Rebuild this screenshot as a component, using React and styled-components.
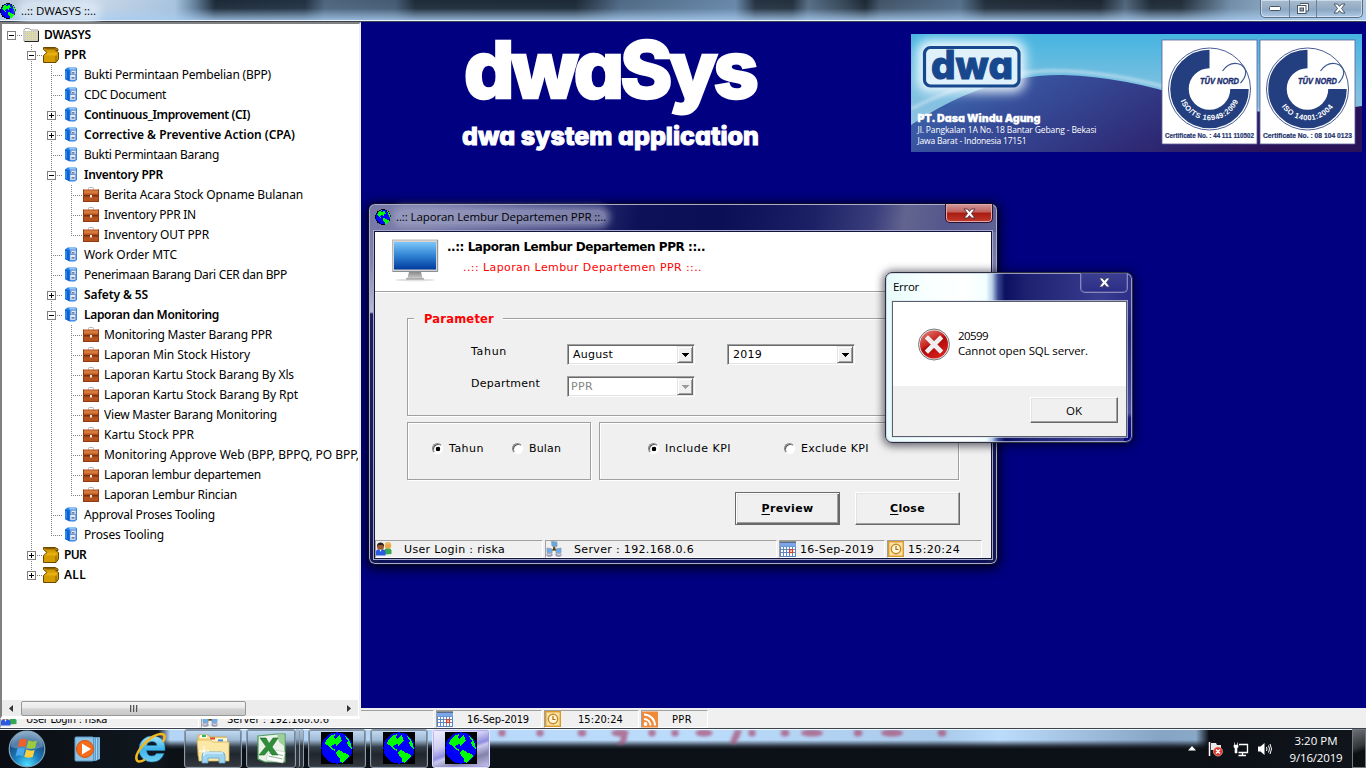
import React, { useLayoutEffect, useRef } from "react";
import styled, { createGlobalStyle, css } from "styled-components";

const Global = createGlobalStyle`
  * { box-sizing: border-box; }
  html, body { margin: 0; padding: 0; overflow: hidden; }
  body { font: 11px "DejaVu Sans", Verdana, sans-serif; color: #000; background: #000080; }
`;

const VERDANA = '"DejaVu Sans", Verdana, sans-serif';
const TAHOMA = '"DejaVu Sans Condensed", "DejaVu Sans", Tahoma, sans-serif';
const TREBUCHET = '"Trebuchet MS", "Noto Sans", sans-serif';
const SEGOE = '"Open Sans", "Noto Sans", sans-serif';
const DISPLAY = 'Inter, "Lato", sans-serif';

/* ---------- text that tracks itself out to a given width ---------- */
const Label = styled.span`
  display: inline-block;
  white-space: pre;
  font-family: ${(p) => p.$font || "inherit"};
  font-size: ${(p) => (p.$size ? p.$size + "px" : "inherit")};
  font-weight: ${(p) => p.$weight || "inherit"};
  color: ${(p) => p.$color || "inherit"};
`;

function Text({ w, size, weight, font, color, children }) {
  const ref = useRef(null);
  useLayoutEffect(() => {
    const el = ref.current;
    el.style.letterSpacing = "0px";
    const n = el.textContent.length;
    const natural = el.getBoundingClientRect().width;
    el.style.letterSpacing = (w - natural) / n + "px";
  }, [w, children]);
  return (
    <Label ref={ref} $size={size} $weight={weight} $font={font} $color={color}>
      {children}
    </Label>
  );
}

/* ---------- icons ---------- */
const GlobeIcon = ({ size = 16, square }) => (
  <svg width={size} height={size} viewBox="0 0 32 32" shapeRendering="crispEdges">
    {square ? <rect width="32" height="32" fill="#000" /> : null}
    <circle cx="16" cy="16" r="15.600" fill={square ? "#0000ff" : "#000"} />
    {square ? null : <circle cx="16" cy="16" r="14" fill="#0000ff" />}
    <path
      fill="#00ff00"
      d="M4 12L5 9L8 5L11 3L14 2L14 4L12 5L15 7L17 4L19 3L20 7L21 9L18 11L17 13L15 14L15 12L11 13L10 15L12 17L14 17L14 19L11 18L8 15L6 13ZM15 20L17 18L20 19L23 21L27 22L28 24L26 27L23 29L22 31L19 30L19 26L16 24ZM24 4L28 8L30 12L31 17L29 16L27 13L25 11L27 9Z"
    />
  </svg>
);

const FolderIcon = () => (
  <svg width="16" height="16" viewBox="0 0 16 16">
    <path d="M1 3L2 1.500H6L8 3H15V14H1Z" fill="#fff" stroke="#a0a0a0" />
    <rect x="2" y="4" width="12" height="9.500" fill="#dedba8" />
    <path d="M2 4.500H14M2 6.500H14M2 8.500H14M2 10.500H14M2 12.500H14" stroke="#c4c4c4" strokeDasharray="1 1" />
    <path d="M15.500 4V14.500H1.500" fill="none" stroke="#222" />
  </svg>
);

const BoxIcon = () => (
  <svg width="16" height="16" viewBox="0 0 16 16">
    <path d="M0.500 8.500L4 5.500L0.500 2.500V0.500H12L15 2V3.500H12.500L15.500 5.500V12L13 15.500H0.500Z" fill="#d39c00" stroke="#6b4700" />
    <path d="M1 1H12L14 2.500H3Z" fill="#8a5f00" />
    <path d="M5 5.500H14.500L12.500 8.500H1.500Z" fill="#e8b010" />
    <path d="M13 9V15" stroke="#8a5f00" />
  </svg>
);

const CabinetIcon = () => (
  <svg width="16" height="16" viewBox="0 0 16 16">
    <path d="M2 2.500L4.500 0.500H13L14 1.500V12.500L12 14.500H7L2 12Z" fill="#2a86e6" />
    <path d="M2 2.500L6.500 3.500V14.500L2 12Z" fill="#0a62d6" />
    <path d="M3 4V11.500" stroke="#5ab0ff" />
    <path d="M6 1.200H12.500L13.200 2.500H7Z" fill="#b9d9fb" />
    <path d="M7 3H13.200V13.500H7Z" fill="#6d97d4" />
    <path d="M8.500 3.800H12.700V7H8.500ZM7.300 8H12.200V12.800H7.300Z" fill="#e3ecf8" />
    <path d="M9 5.800H11.500M8.500 10.800H11.500" stroke="#44598a" strokeWidth="1.300" />
  </svg>
);

const CaseIcon = () => (
  <svg width="16" height="16" viewBox="0 0 16 16">
    <path d="M5.500 3V1.500Q5.500 0.500 6.500 0.500H9.500Q10.500 0.500 10.500 1.500V3" fill="none" stroke="#b5b5b5" />
    <rect x="0" y="2.500" width="16" height="12.500" fill="#b4531f" />
    <rect x="1" y="3.500" width="14" height="3" fill="#d67a3c" />
    <rect x="0" y="8" width="16" height="1.500" fill="#7c2f0c" />
    <path d="M0.500 2.500V15M15.500 2.500V15M0 14.500H16" stroke="#8f3a10" />
    <rect x="7" y="8" width="2" height="2.500" fill="#f3ece6" />
  </svg>
);

const UsersIcon = () => (
  <svg width="16" height="16" viewBox="0 0 16 16">
    <path d="M8.500 13.500V9.500Q8.500 7 11.500 7Q15 7 15.500 9.500V13Z" fill="#35a852" />
    <circle cx="12" cy="4.500" r="3.200" fill="#f0a542" />
    <path d="M8.800 4Q9 1 12 1Q15.200 1 15.200 4L13.500 3Z" fill="#e7bd6a" />
    <path d="M0 14.500V10.500Q0 8 4.500 8Q9 8 9.500 10.500V14.500Z" fill="#2a5ae0" />
    <circle cx="4.500" cy="5.500" r="3.500" fill="#9a5b32" />
    <path d="M1 5.500Q1 1.500 4.500 1.500Q8 1.500 8 5.500L6.500 4H2.500Z" fill="#2a211d" />
    <path d="M3.500 8.500L4.500 11L5.500 8.500Z" fill="#fff" />
  </svg>
);

const NetworkIcon = () => (
  <svg width="16" height="16" viewBox="0 0 16 16">
    <path d="M8 5V9M8 8L4.500 10M8 8L11.500 10" stroke="#8a6a2a" strokeWidth="1.800" />
    <path d="M5.500 0.500L11 1V5.500L6 5Z" fill="#5da9ea" stroke="#8b9ab0" strokeWidth="0.800" />
    <path d="M1 7L6 8V12L1 11.500ZM10 8L15 7V11.500L10 12Z" fill="#67b0f0" stroke="#8b9ab0" strokeWidth="0.800" />
    <ellipse cx="3.500" cy="13.800" rx="3.200" ry="2" fill="#9c9fb8" />
    <ellipse cx="12.500" cy="13.800" rx="3.200" ry="2" fill="#9c9fb8" />
    <path d="M1.500 13.500L5 13M11 13L14.500 13.500" stroke="#dfe2ee" />
    <rect x="7" y="6.500" width="2.500" height="3" fill="#59431b" />
  </svg>
);

const CalendarIcon = () => (
  <svg width="16" height="16" viewBox="0 0 16 16">
    <rect x="0" y="1" width="16" height="15" fill="#5f86c4" />
    <rect x="0" y="1" width="16" height="4.500" fill="#7ba7e8" />
    <path d="M0.500 1H16" stroke="#333" strokeWidth="2" strokeDasharray="1 1" />
    <path
      fill="#fff"
      d="M1 6h2v2H1zM4 6h2v2h-2zM7 6h2v2h-2zM10 6h2v2h-2zM13 6h2v2h-2zM1 9h2v2H1zM4 9h2v2h-2zM7 9h2v2h-2zM13 9h2v2h-2zM1 12h2v3H1zM4 12h2v3h-2zM7 12h2v3h-2zM10 12h2v3h-2zM13 12h2v3h-2z"
    />
    <rect x="9.700" y="8.700" width="2.800" height="2.800" fill="#fff" stroke="#e63b12" strokeWidth="1.200" />
  </svg>
);

const ClockIcon = () => (
  <svg width="16" height="16" viewBox="0 0 16 16">
    <rect x="0.700" y="0.700" width="14.600" height="14.600" fill="#fbe3a4" stroke="#d99a2b" strokeWidth="1.400" />
    <circle cx="8" cy="8" r="4.700" fill="#fff6dc" stroke="#c98a25" strokeWidth="1.500" />
    <path d="M8 5V8.500H10.500" fill="none" stroke="#a86c12" strokeWidth="1.200" />
  </svg>
);

const RssIcon = () => (
  <svg width="16" height="17" viewBox="0 0 16 16">
    <rect width="16" height="16" fill="#ef8b38" />
    <circle cx="3.500" cy="12.500" r="1.900" fill="#fff" />
    <path d="M2 7.500A6.500 6.500 0 0 1 8.500 14M2 3A11 11 0 0 1 13 14" fill="none" stroke="#fff" strokeWidth="2" />
  </svg>
);

const MonitorIcon = () => (
  <svg width="48" height="44" viewBox="0 0 48 44">
    <defs>
      <linearGradient id="screen" x1="0" y1="0" x2="0" y2="1">
        <stop offset="0" stopColor="#7cc6f8" />
        <stop offset=".5" stopColor="#2f82d4" />
        <stop offset="1" stopColor="#003a9c" />
      </linearGradient>
      <linearGradient id="stand" x1="0" y1="0" x2="0" y2="1">
        <stop offset="0" stopColor="#8a8a8a" />
        <stop offset="1" stopColor="#d8d8d8" />
      </linearGradient>
    </defs>
    <ellipse cx="23" cy="41" rx="20" ry="1.300" fill="#e2e2e2" />
    <path d="M17 33H29L31 40.500H15Z" fill="url(#stand)" />
    <rect x="14" y="39" width="18" height="1.800" fill="#b0b0b0" />
    <rect x="0.500" y="1" width="45" height="31.500" fill="#d6d3d0" stroke="#b9b9b9" />
    <path d="M45.700 1V32.500H1" fill="none" stroke="#8b8f94" />
    <rect x="2" y="3" width="42" height="27.500" fill="url(#screen)" />
  </svg>
);

const CrossMark = ({ fill = "#fff", stroke = "#50505c" }) => (
  <svg width="13" height="11" viewBox="0 0 13 11">
    <path
      d="M1 1H4.500L6.500 3.400L8.500 1H12L8.500 5.500L12 10H8.500L6.500 7.600L4.500 10H1L4.500 5.500Z"
      fill={fill}
      stroke={stroke}
    />
  </svg>
);

const ErrorIcon = () => (
  <svg width="33" height="33" viewBox="0 0 33 33">
    <defs>
      <linearGradient id="err" x1="0" y1="0" x2="0.600" y2="1">
        <stop offset="0" stopColor="#e88a84" />
        <stop offset=".5" stopColor="#c8201c" />
        <stop offset=".55" stopColor="#ad0808" />
        <stop offset="1" stopColor="#d8201c" />
      </linearGradient>
    </defs>
    <circle cx="16" cy="16.500" r="15.500" fill="#e4e4e4" stroke="#7b7b7b" />
    <circle cx="16" cy="16.500" r="14" fill="url(#err)" />
    <path d="M10 10.500L22 22.500M22 10.500L10 22.500" stroke="#efefef" strokeWidth="4.600" strokeLinecap="square" />
  </svg>
);

const ComboArrow = ({ color }) => (
  <svg width="8" height="4" viewBox="0 0 8 4" shapeRendering="crispEdges">
    <path d="M0 0H8L4 4Z" fill={color} />
  </svg>
);

const StartOrb = () => (
  <svg width="38" height="38" viewBox="0 0 38 38">
    <defs>
      <radialGradient id="orb" cx=".5" cy=".95" r=".9">
        <stop offset="0" stopColor="#4fe0ff" />
        <stop offset=".4" stopColor="#1b7fc0" />
        <stop offset=".75" stopColor="#1c4f84" />
        <stop offset="1" stopColor="#6f93b5" />
      </radialGradient>
    </defs>
    <circle cx="19" cy="19" r="17.800" fill="url(#orb)" stroke="#7fa2bd" strokeWidth="1.200" />
    <path d="M3 17A16 16 0 0 1 35 17Q19 22 3 17Z" fill="#b8d4e8" opacity=".35" />
    <path d="M11.500 10Q15 7.500 19 9.800L17.200 17.300Q13.500 15.300 9.700 17.500Z" fill="#f0602a" />
    <path d="M20.300 10.300Q24.500 12.500 29 10.500L27 18Q22.500 19.700 18.500 17.800Z" fill="#9ccb3c" />
    <path d="M9.300 19Q13 17 16.900 19L15 26.300Q11.500 24.300 7.500 26.500Z" fill="#49a9ea" />
    <path d="M18.200 19.500Q22.500 21.500 26.700 19.700L24.800 27Q20.500 28.700 16.300 26.800Z" fill="#fcd03c" />
  </svg>
);

const PlayerIcon = () => (
  <svg width="28" height="28" viewBox="0 0 28 28">
    <path d="M6 2H26V24L22 26H6Z" fill="#5b9cc9" />
    <path d="M20 3V25M22.500 3V25M25 3V24" stroke="#a9d4f0" strokeWidth="1" />
    <rect x="1" y="2" width="18.500" height="24" rx="1" fill="#8ec3e6" stroke="#5c9ac6" />
    <circle cx="11" cy="14" r="8.500" fill="#f36c1c" stroke="#d9540c" />
    <path d="M8 8.500L17 14L8 19.500Z" fill="#fff" />
  </svg>
);

const ExplorerEIcon = () => (
  <svg width="32" height="32" viewBox="0 0 32 32">
    <defs>
      <linearGradient id="ie" x1="0" y1="0" x2="0" y2="1">
        <stop offset="0" stopColor="#a9e6fb" />
        <stop offset=".5" stopColor="#3db4ea" />
        <stop offset="1" stopColor="#6fd0f4" />
      </linearGradient>
    </defs>
    <path
      fillRule="evenodd"
      d="M17 4A13 13 0 0 0 4 17A12.500 12.500 0 0 0 17 30Q26 30 29 21.500H21.500Q20 24 17 24Q12 24 11.500 18.500H30Q31 4 17 4ZM11.700 13.500Q12.500 9.500 17 9.500Q21.500 9.500 22 13.500Z"
      fill="url(#ie)"
      stroke="#1c7fb8"
      strokeWidth=".6"
    />
    <path d="M28 10Q32 2 26 2Q19 2 9 12Q-1 23 2 28.500Q4 31 10 27.500" fill="none" stroke="#f3b81d" strokeWidth="2.600" />
  </svg>
);

const LibraryIcon = () => (
  <svg width="34" height="32" viewBox="0 0 34 32">
    <path d="M2 3H12L14 5H30V24H2Z" fill="#f5dd8c" stroke="#d2a843" strokeWidth=".8" />
    <path d="M4 3H11V6H4Z" fill="#fff" />
    <rect x="6" y="3" width="4" height="2" fill="#35b455" />
    <path d="M13 6H31V10H13Z" fill="#fff4cc" />
    <rect x="14" y="5.500" width="5" height="2" fill="#d9432f" />
    <rect x="22" y="7.500" width="5" height="2" fill="#3a8bd8" />
    <path d="M1 8H15L17 10H33V29H3Z" fill="#fbe7a6" stroke="#d8b352" strokeWidth=".8" />
    <path d="M6 31V24Q6 20 10 20H25Q29 20 29 24V31H23V26H12V31Z" fill="#9fd4ef" stroke="#5ba3cf" strokeWidth=".8" />
    <path d="M8 21H27" stroke="#d9f2fd" strokeWidth="1.500" />
    <path d="M8 14V24M3 19H13" stroke="#fff" strokeWidth="1" />
  </svg>
);

const SheetIcon = () => (
  <svg width="32" height="32" viewBox="0 0 32 32">
    <path d="M3 4L22 2H30V30H10L3 27Z" fill="#e9f3e8" stroke="#4f9b58" strokeWidth="1.200" />
    <path d="M22 3H29V14L24 10Z" fill="#9fd09a" />
    <path d="M14 17L30 20L28 31L11 28Z" fill="#fff" stroke="#b9c9b9" strokeWidth=".6" />
    <path d="M14 21L28 23.500M13.500 24L27.500 27" stroke="#8fb58e" strokeWidth="1" />
    <path d="M5 6H11L14 11.500L18 6H23L17 15L23 23H17L13.500 18L9.500 23H4L11 14.500Z" fill="#2f8e3a" stroke="#1d6b28" strokeWidth=".6" />
  </svg>
);

/* ---------- main window ---------- */
const Screen = styled.div`
  position: relative;
  width: 1366px;
  height: 768px;
  overflow: hidden;
  display: grid;
  grid-template-rows: 22px 686px 20px 40px;
`;

const AppTitle = styled.header`
  display: flex;
  align-items: flex-start;
  justify-content: space-between;
  border-bottom: 1px solid #3c4450;
  box-shadow: inset 0 -1px 0 #e8f2fb;
  background:
    linear-gradient(180deg, rgba(160, 190, 220, 0.05) 0%, rgba(150, 185, 220, 0.12) 40%, rgba(168, 204, 240, 0.85) 98%),
    linear-gradient(92deg, #b6c2d0 0, #c9d8e8 100px, #a9c4de 175px, #5f7b96 195px, #15202c 215px, #1b2938 305px,
      #4a6078 325px, #40556c 395px, #17222e 415px, #15202b 575px, #4b647f 620px, #6585a6 735px, #1e2a36 755px,
      #1c2733 792px, #52687e 808px, #2e3d4c 845px, #151f29 865px, #3c4e60 880px, #506a84 960px, #1a242e 985px,
      #151d26 1100px, #4b6074 1125px, #18222c 1150px, #1a242e 1180px, #6f8aa4 1230px, #9db8d2 1300px, #b5cbe0 1366px);
`;
const TitleLeft = styled.div`
  display: flex;
  align-items: center;
  gap: 5px;
  padding-top: 1px;
  height: 20px;
  svg { display: block; }
`;
const TitleGlow = styled.div`
  height: 16px;
  display: flex;
  align-items: center;
  background: rgba(222, 234, 246, 0.75);
  box-shadow: 0 0 8px 5px rgba(222, 234, 246, 0.75);
  border-radius: 8px;
`;
const WindowButtons = styled.div`
  display: flex;
  height: 18px;
  margin-right: 3px;
  border: 1px solid #5b6e82;
  border-top: 0;
  border-radius: 0 0 5px 5px;
  background: linear-gradient(#a9bccf 0%, #93abc4 50%, #87a3c0 51%, #b0cae6 100%);
  box-shadow: inset 0 0 0 1px rgba(230, 242, 255, 0.6);
`;
const WindowButton = styled.div`
  width: ${(p) => p.$w}px;
  display: flex;
  align-items: center;
  justify-content: center;
  & + & { border-left: 1px solid #6c8096; }
`;

const Main = styled.main`
  display: flex;
  min-height: 0;
`;
const Workspace = styled.section`
  flex: 1;
  display: flex;
  justify-content: space-between;
  align-items: flex-start;
  background: #000080;
  color: #fff;
  padding: 7px 4px 0 101px;
`;
const Brand = styled.div`
  display: flex;
  flex-direction: column;
  font-family: ${DISPLAY};
  font-feature-settings: "cv11" 1;
`;
const BrandName = styled.div`
  height: 82px;
  line-height: 80px;
  font-size: 79px;
  font-weight: 800;
  padding-left: 2px;
  -webkit-text-stroke: 2.500px #fff;
`;
const BrandLine = styled.div`
  height: 40px;
  line-height: 40px;
  margin-top: 5px;
  font-size: 25px;
  font-weight: 800;
  -webkit-text-stroke: 1px #fff;
`;
const BannerWrap = styled.div`
  margin-top: 5px;
  svg { display: block; }
`;

/* ---------- tree ---------- */
const TreePanel = styled.aside`
  position: relative;
  z-index: 1;
  width: 361px;
  height: 697px;
  flex: none;
  display: flex;
  flex-direction: column;
  background: #fff;
  border-left: 2px solid #808080;
  border-top: 2px solid #808080;
  border-right: 2px solid #f0f0f0;
  border-bottom: 3px solid #fff;
`;
const Rows = styled.div`
  flex: 1;
  padding-top: 1px;
  overflow: hidden;
  width: 356px;
`;
const Row = styled.div`
  height: 20px;
  display: flex;
  align-items: center;
  font: ${(p) => (p.$bold ? 600 : 400)} 12px ${TREBUCHET};
  line-height: 20px;
  svg { display: block; flex: none; margin: 0 5px 0 1px; }
`;
const dotsV = "repeating-linear-gradient(180deg, #808080 0 1px, transparent 1px 2px)";
const dotsH = "repeating-linear-gradient(90deg, #808080 0 1px, transparent 1px 2px)";
const lines = {
  empty: css``,
  through: css`background: ${dotsV} 9px 0 / 1px 20px no-repeat;`,
  branch: css`background: ${dotsV} 9px 0 / 1px 20px no-repeat, ${dotsH} 9px 10px / 11px 1px no-repeat;`,
  last: css`background: ${dotsV} 9px 0 / 1px 10px no-repeat, ${dotsH} 9px 10px / 11px 1px no-repeat;`,
  root: css`background: ${dotsH} 9px 10px / 11px 1px no-repeat;`,
};
const Guide = styled.div`
  width: 20px;
  height: 20px;
  flex: none;
  padding: 6px 0 0 5px;
  ${(p) => lines[p.$kind]}
`;
const Toggle = styled.div`
  width: 9px;
  height: 9px;
  border: 1px solid #808080;
  background:
    linear-gradient(#000, #000) 1px 3px / 5px 1px no-repeat,
    linear-gradient(#000, #000) 3px 1px / 1px ${(p) => (p.$open ? 0 : 5)}px no-repeat,
    #fff;
`;

const ICONS = { folder: FolderIcon, box: BoxIcon, cab: CabinetIcon, case: CaseIcon };
const KINDS = { ".": "empty", "|": "through", "+": "branch", "L": "last", "r": "root" };

// [guides, icon, label, width, bold, toggle]
const TREE = [
  ["r", "folder", "DWASYS", 47, 1, "open"],
  [".+", "box", "PPR", 22, 1, "open"],
  [".|+", "cab", "Bukti Permintaan Pembelian (BPP)", 187],
  [".|+", "cab", "CDC Document", 82],
  [".|+", "cab", "Continuous_Improvement (CI)", 166, 1, "closed"],
  [".|+", "cab", "Corrective & Preventive Action (CPA)", 211, 1, "closed"],
  [".|+", "cab", "Bukti Permintaan Barang", 135],
  [".|+", "cab", "Inventory PPR", 79, 1, "open"],
  [".||+", "case", "Berita Acara Stock Opname Bulanan", 199],
  [".||+", "case", "Inventory PPR IN", 92],
  [".||L", "case", "Inventory OUT PPR", 105],
  [".|+", "cab", "Work Order MTC", 93],
  [".|+", "cab", "Penerimaan Barang Dari CER dan BPP", 203],
  [".|+", "cab", "Safety & 5S", 64, 1, "closed"],
  [".|+", "cab", "Laporan dan Monitoring", 135, 1, "open"],
  [".||+", "case", "Monitoring Master Barang PPR", 168],
  [".||+", "case", "Laporan Min Stock History", 146],
  [".||+", "case", "Laporan Kartu Stock Barang By Xls", 190],
  [".||+", "case", "Laporan Kartu Stock Barang By Rpt", 194],
  [".||+", "case", "View Master Barang Monitoring", 173],
  [".||+", "case", "Kartu Stock PPR", 90],
  [".||+", "case", "Monitoring Approve Web (BPP, BPPQ, PO BPP,", 255],
  [".||+", "case", "Laporan lembur departemen", 157],
  [".||L", "case", "Laporan Lembur Rincian", 133],
  [".|+", "cab", "Approval Proses Tooling", 131],
  [".|L", "cab", "Proses Tooling", 80],
  [".+", "box", "PUR", 22, 1, "closed"],
  [".L", "box", "ALL", 22, 1, "closed"],
];

const ScrollBar = styled.div`
  height: 16px;
  width: 356px;
  display: flex;
  align-items: center;
  background: #ececec;
`;
const ScrollArrow = styled.div`
  width: 18px;
  display: flex;
  justify-content: center;
`;
const ScrollThumb = styled.div`
  width: 225px;
  height: 15px;
  margin-left: 1px;
  border: 1px solid #979797;
  border-radius: 2px;
  background: linear-gradient(#f4f4f4 0, #e8e8e8 48%, #d3d3d3 52%, #c8c8c8 100%);
  display: flex;
  align-items: center;
  justify-content: center;
  gap: 2px;
`;
const Grip = styled.i`
  width: 1px;
  height: 7px;
  background: #555;
  box-shadow: 1px 0 #bbb;
`;
const Spacer = styled.div`
  flex: 1;
`;

function Tree() {
  return (
    <TreePanel>
      <Rows>
        {TREE.map(([guides, icon, label, w, bold, toggle]) => {
          const Icon = ICONS[icon];
          return (
            <Row key={label} $bold={bold}>
              {[...guides].map((g, i) => (
                <Guide key={i} $kind={KINDS[g]}>
                  {toggle && i === guides.length - 1 ? <Toggle $open={toggle === "open"} /> : null}
                </Guide>
              ))}
              <Icon />
              <Text w={w}>{label}</Text>
            </Row>
          );
        })}
      </Rows>
      <ScrollBar>
        <ScrollArrow>
          <svg width="4" height="7" viewBox="0 0 4 7"><path d="M4 0V7L0 3.500Z" fill="#333" /></svg>
        </ScrollArrow>
        <ScrollThumb><Grip /><Grip /><Grip /></ScrollThumb>
        <Spacer />
        <ScrollArrow>
          <svg width="4" height="7" viewBox="0 0 4 7"><path d="M0 0V7L4 3.500Z" fill="#333" /></svg>
        </ScrollArrow>
      </ScrollBar>
    </TreePanel>
  );
}

/* ---------- status bars ---------- */
const StatusBar = styled.footer`
  display: flex;
  gap: ${(p) => p.$gap}px;
  height: ${(p) => p.$h}px;
  padding-top: 2px;
  background: #f0f0f0;
  font-family: ${(p) => p.$font};
  font-size: 11px;
`;
const StatusCell = styled.div`
  width: ${(p) => p.$w}px;
  display: flex;
  align-items: center;
  border-top: 1px solid #a0a0a0;
  border-left: 1px solid #a0a0a0;
  border-right: 1px solid #fff;
  border-bottom: 1px solid #fff;
  svg { display: block; flex: none; margin-right: ${(p) => p.$pad}px; }
`;

/* ---------- banner picture ---------- */
function Seal({ x, title, number, id }) {
  const cx = x + 47.5;
  return (
    <g>
      <rect x={x} y="6" width="95" height="104" fill="#fff" stroke="#5a5f9c" strokeWidth=".8" />
      <circle cx={cx} cy="55" r="41" fill="none" stroke="#4b5d94" strokeWidth="1" />
      <path d={`M${cx} 25A30 30 0 1 0 ${cx + 30} 55`} fill="none" stroke="#233f7f" strokeWidth="18.500" />
      <path
        d={`M${cx + 13} 37Q${cx + 21} 26 ${cx + 32} 31Q${cx + 41} 38 ${cx + 31} 49`}
        fill="none"
        stroke="#3b5590"
        strokeWidth="1.200"
      />
      <text x={cx - 9.5} y="50" fontSize="8.500" fontWeight="700" fontStyle="italic" fontFamily="Liberation Sans"
        textLength="39" lengthAdjust="spacingAndGlyphs" fill="#1d2f72" stroke="#1d2f72" strokeWidth=".4">TÜV NORD</text>
      <path id={id} d={`M${cx - 30.5} 62A31.300 31.300 0 0 0 ${cx + 30.5} 62`} fill="none" />
      <text fontSize="7.500" fontWeight="700" fontFamily="Liberation Sans" fill="#fff" letterSpacing=".4">
        <textPath href={"#" + id} startOffset="50%" textAnchor="middle">{title}</textPath>
      </text>
      <text x={x + 3} y="104" fontSize="6.500" fontWeight="700" fontFamily="Liberation Sans" textLength="89"
        lengthAdjust="spacingAndGlyphs" fill="#26356f" stroke="#26356f" strokeWidth=".2">{number}</text>
    </g>
  );
}

const Banner = () => (
  <svg width="451" height="118" viewBox="0 0 451 118">
    <defs>
      <linearGradient id="sky" x1="0" y1="0" x2="0" y2="1">
        <stop offset="0" stopColor="#45b4e0" />
        <stop offset=".4" stopColor="#76bfe0" />
        <stop offset="1" stopColor="#a2c4e0" />
      </linearGradient>
      <linearGradient id="hill" x1="0" y1="0" x2="1" y2=".3">
        <stop offset="0" stopColor="#3f74b4" />
        <stop offset=".3" stopColor="#37509c" />
        <stop offset=".65" stopColor="#30307c" />
        <stop offset="1" stopColor="#2a1258" />
      </linearGradient>
      <filter id="soft" x="-30%" y="-50%" width="160%" height="200%"><feGaussianBlur stdDeviation="6" /></filter>
      <filter id="edge" x="-10%" y="-10%" width="120%" height="120%"><feGaussianBlur stdDeviation="1.500" /></filter>
    </defs>
    <rect width="451" height="118" fill="url(#sky)" />
    <path d="M0 75Q80 34 155 37Q220 40 300 66L451 100" fill="none" stroke="#cfe4f2" strokeWidth="3" opacity=".7" filter="url(#edge)" />
    <path d="M0 91Q75 40 152 41Q215 43 280 65Q350 88 451 72V118H0Z" fill="url(#hill)" />
    <rect x="6" y="6" width="108" height="52" rx="12" fill="#f2fbff" filter="url(#soft)" />
    <rect x="13.500" y="13.500" width="94.500" height="38.500" rx="6" fill="#dff1fa" stroke="#17478d" strokeWidth="3.200" />
    <text x="20" y="45" fontFamily="Inter" fontWeight="800" fontSize="39" fill="#17478d" stroke="#17478d" strokeWidth="1"
      textLength="82" lengthAdjust="spacingAndGlyphs" style={{ fontFeatureSettings: '"cv11" 1' }}>dwa</text>
    <g fill="#fff">
      <text x="6.500" y="88" fontFamily="Inter" fontWeight="900" fontSize="11" stroke="#fff" strokeWidth=".3"
        textLength="123" lengthAdjust="spacingAndGlyphs" style={{ fontFeatureSettings: '"cv11" 1' }}>PT. Dasa Windu Agung</text>
      <text x="6.500" y="99" fontFamily="Open Sans" fontSize="8.500" textLength="179">Jl. Pangkalan 1A No. 18 Bantar Gebang - Bekasi</text>
      <text x="6.500" y="110" fontFamily="Open Sans" fontSize="8.500" textLength="109">Jawa Barat - Indonesia 17151</text>
    </g>
    <Seal x={251} id="arcA" title="ISO/TS 16949:2009" number="Certificate No. : 44 111 110502" />
    <Seal x={349} id="arcB" title="ISO 14001:2004" number="Certificate No. : 08 104 0123" />
  </svg>
);

/* ---------- report dialog ---------- */
const ReportWindow = styled.section`
  position: absolute;
  left: 368px;
  top: 203px;
  width: 630px;
  height: 362px;
  padding: 0 5px 5px;
  display: flex;
  flex-direction: column;
  border: 1px solid #0c0c28;
  border-radius: 7px;
  box-shadow: inset 0 0 0 1px #a9abd0, 0 2px 10px 3px rgba(0, 0, 20, 0.75);
  background:
    linear-gradient(180deg, #7a7cac 0, #8184ae 30px, #b9bbd6 80px, #1c2060 82px, #141850 100%) 0 28px / 10px 100% no-repeat,
    linear-gradient(180deg, #70729f 0, #8285ae 50px, #5a5c90 110px, #141850 180px) 100% 28px / 10px 100% no-repeat,
    linear-gradient(180deg, transparent 330px, #0c1158 331px),
    linear-gradient(100deg, #7779a6 0, #7779a6 60px, #53568e 130px, #0c1158 270px, #0a0f56 350px, #1c2166 440px,
      #3a3e7c 500px, #62648f 530px, #54578c 570px, #6b6e9c 100%);
`;
const ReportTitle = styled.div`
  height: 27px;
  display: flex;
  align-items: center;
  justify-content: space-between;
  padding-left: 1px;
`;
const ReportCaption = styled.div`
  display: flex;
  align-items: center;
  gap: 5px;
  padding-bottom: 2px;
  svg { display: block; }
`;
const CaptionGlow = styled.div`
  height: 14px;
  display: flex;
  align-items: center;
  border-radius: 7px;
  background: rgba(160, 163, 196, 0.7);
  box-shadow: 0 0 7px 4px rgba(160, 163, 196, 0.7);
`;
const CloseBox = styled.div`
  align-self: flex-start;
  width: ${(p) => p.$w}px;
  height: ${(p) => p.$h}px;
  margin-right: -1px;
  display: flex;
  align-items: center;
  justify-content: center;
  border: 1px solid ${(p) => (p.$glass ? "#8688ba" : "#2b1030")};
  border-top: 0;
  border-radius: 0 0 5px 5px;
  box-shadow: inset 0 0 0 1px ${(p) => (p.$glass ? "rgba(110,112,180,.45)" : "#e0aaa8")};
  background: ${(p) =>
    p.$glass
      ? "linear-gradient(#3c3e92, #2c2e86)"
      : "linear-gradient(#d09a9c 0, #c0605c 45%, #a81a10 50%, #c03c30 100%)"};
`;
const ReportBody = styled.div`
  flex: 1;
  display: flex;
  flex-direction: column;
  background: #f0f0f0;
  border: 1px solid #12163c;
  box-shadow: 0 0 0 1px #a5a8cc;
`;
const ReportHeader = styled.div`
  height: 60px;
  display: flex;
  gap: 7px;
  padding: 7px 0 0 17px;
  background: #fff;
  border-bottom: 1px solid #a0a0a0;
  box-shadow: 0 1px #fff;
`;
const HeaderLines = styled.div`
  line-height: 18px;
  margin-top: -1px;
  div + div { padding-left: 16px; margin-top: 2px; }
`;
const GroupLine = css`
  border: 1px solid #a0a0a0;
  box-shadow: inset 1px 1px #fff, 1px 1px #fff;
`;
const Form = styled.div`
  flex: 1;
  padding: 26px 31px 0 32px;
`;
const ParamGroup = styled.div`
  width: 552px;
  height: 98px;
  ${GroupLine}
`;
const Legend = styled.div`
  display: inline-block;
  height: 16px;
  line-height: 16px;
  margin: -8px 0 0 6px;
  padding: 0 9px 0 10px;
  background: #f0f0f0;
  vertical-align: top;
`;
const ParamRow = styled.div`
  display: flex;
  align-items: flex-start;
  height: 32px;
  padding-left: 63px;
  margin-top: ${(p) => p.$top || 0}px;
  line-height: 14px;
`;
const ParamName = styled.div`
  width: 96px;
`;
const Combo = styled.div`
  width: 128px;
  height: 21px;
  margin: -1px 32px 0 0;
  display: flex;
  justify-content: space-between;
  align-items: center;
  padding-left: ${(p) => (p.$off ? 3 : 5)}px;
  background: #fff;
  color: ${(p) => (p.$off ? "#848484" : "#000")};
  border: 1px solid;
  border-color: #a0a0a0 #fff #fff #a0a0a0;
  box-shadow: inset 1px 1px #696969, inset -1px -1px #e3e3e3;
`;
const ComboButton = styled.div`
  width: 16px;
  height: 17px;
  margin-right: 1px;
  display: flex;
  align-items: center;
  justify-content: center;
  background: #f0f0f0;
  border: 1px solid;
  border-color: #e3e3e3 #696969 #696969 #e3e3e3;
  box-shadow: inset 1px 1px #fff, inset -1px -1px #a0a0a0;
`;
const RadioRow = styled.div`
  display: flex;
  gap: 8px;
  margin-top: 6px;
`;
const RadioGroup = styled.div`
  width: ${(p) => p.$w}px;
  height: 58px;
  display: flex;
  align-items: flex-start;
  gap: ${(p) => p.$gap}px;
  padding: 18px 0 0 ${(p) => p.$pad}px;
  ${GroupLine}
`;
const Option = styled.div`
  display: flex;
  align-items: center;
  gap: 6px;
  height: 14px;
`;
const Dot = styled.i`
  width: 11px;
  height: 11px;
  border-radius: 50%;
  border: 1px solid;
  border-color: #8a8a8a #fff #fff #8a8a8a;
  box-shadow: inset 1px 1px #5a5a5a;
  background: ${(p) => (p.$on ? "radial-gradient(circle at 5px 5px, #000 0 2px, #fff 2.6px)" : "#fff")};
`;
const Buttons = styled.div`
  display: flex;
  gap: 15px;
  padding: 12px 0 0 328px;
`;
const Button = styled.div`
  width: ${(p) => p.$w}px;
  height: ${(p) => p.$h}px;
  flex: none;
  display: flex;
  align-items: center;
  justify-content: center;
  background: #f0f0f0;
  border: 1px solid;
  border-color: ${(p) => (p.$default ? "#696969" : "#fff #696969 #696969 #fff")};
  box-shadow: ${(p) =>
    p.$default
      ? "inset 1px 1px #fff, inset -1px -1px #696969, inset -2px -2px #a0a0a0, inset 2px 2px #e3e3e3"
      : "inset -1px -1px #a0a0a0, inset 1px 1px #e3e3e3"};
  u { text-underline-offset: 2px; text-decoration-thickness: 1px; }
`;

function Report() {
  return (
    <ReportWindow>
      <ReportTitle>
        <ReportCaption>
          <GlobeIcon />
          <CaptionGlow><Text w={210} font={SEGOE} size={11.5}>..:: Laporan Lembur Departemen PPR ::..</Text></CaptionGlow>
        </ReportCaption>
        <CloseBox $w={48} $h={19}><CrossMark stroke="#5a3238" /></CloseBox>
      </ReportTitle>
      <ReportBody>
        <ReportHeader>
          <MonitorIcon />
          <HeaderLines>
            <div><Text w={258} size={12} weight={700}>..:: Laporan Lembur Departemen PPR ::..</Text></div>
            <div><Text w={239} size={11} color="#ff0000">..:: Laporan Lembur Departemen PPR ::..</Text></div>
          </HeaderLines>
        </ReportHeader>
        <Form>
          <ParamGroup>
            <Legend><Text w={70} size={11.5} weight={700} color="#ff0000">Parameter</Text></Legend>
            <ParamRow $top={13}>
              <ParamName><Text w={36}>Tahun</Text></ParamName>
              <Combo><Text w={40}>August</Text><ComboButton><ComboArrow color="#000" /></ComboButton></Combo>
              <Combo><Text w={29}>2019</Text><ComboButton><ComboArrow color="#000" /></ComboButton></Combo>
            </ParamRow>
            <ParamRow>
              <ParamName><Text w={69}>Department</Text></ParamName>
              <Combo $off><Text w={22}>PPR</Text><ComboButton><ComboArrow color="#9a9a9a" /></ComboButton></Combo>
            </ParamRow>
          </ParamGroup>
          <RadioRow>
            <RadioGroup $w={184} $pad={24} $gap={28}>
              <Option><Dot $on /><Text w={35}>Tahun</Text></Option>
              <Option><Dot /><Text w={32}>Bulan</Text></Option>
            </RadioGroup>
            <RadioGroup $w={360} $pad={48} $gap={53}>
              <Option><Dot $on /><Text w={66}>Include KPI</Text></Option>
              <Option><Dot /><Text w={68}>Exclude KPI</Text></Option>
            </RadioGroup>
          </RadioRow>
          <Buttons>
            <Button $w={105} $h={33} $default><Text w={52} weight={700}><u>P</u>review</Text></Button>
            <Button $w={105} $h={33}><Text w={35} weight={700}><u>C</u>lose</Text></Button>
          </Buttons>
        </Form>
        <StatusBar $h={20} $gap={2} $font={VERDANA}>
          <StatusCell $w={168} $pad={12}><UsersIcon /><Text w={101}>User Login : riska</Text></StatusCell>
          <StatusCell $w={232} $pad={12}><NetworkIcon /><Text w={120}>Server : 192.168.0.6</Text></StatusCell>
          <StatusCell $w={106} $pad={4}><CalendarIcon /><Text w={74}>16-Sep-2019</Text></StatusCell>
          <StatusCell $w={95} $pad={4}><ClockIcon /><Text w={52}>15:20:24</Text></StatusCell>
        </StatusBar>
      </ReportBody>
    </ReportWindow>
  );
}

/* ---------- error message ---------- */
const ErrorWindow = styled.section`
  position: absolute;
  left: 885px;
  top: 272px;
  width: 248px;
  height: 171px;
  padding: 0 5px 5px 6px;
  display: flex;
  flex-direction: column;
  border: 1px solid #2d3038;
  border-radius: 7px;
  box-shadow: inset 0 0 0 1px rgba(200, 205, 235, 0.7), 0 1px 9px 2px rgba(0, 0, 20, 0.6);
  background:
    linear-gradient(180deg, transparent 30px, #22247c 60px, #4a4ca0 140px, #14167a 145px, #060680 100%) 100% 0 / 8px 100% no-repeat,
    linear-gradient(90deg, #e6fbfa 0, #f8ffff 40px, #fff 80px, #f2ffff 100px, #b9cfe8 106px, #3a4a90 112px, #0c1060 119px,
      #1e2070 140px, #2c2e80 180px, #3a3c90 215px, #2c2e88 100%);
`;
const ErrorTitle = styled.div`
  height: 28px;
  display: flex;
  align-items: center;
  justify-content: space-between;
  padding: 0 0 1px 1px;
`;
const ErrorBody = styled.div`
  flex: 1;
  display: flex;
  flex-direction: column;
  border: 1px solid #5b6068;
  box-shadow: 0 0 0 1px rgba(215, 225, 245, 0.65);
  background: #f0f0f0;
`;
const Message = styled.div`
  height: 84px;
  display: flex;
  gap: 7px;
  padding: 26px 0 0 25px;
  background: #fff;
  svg { display: block; }
`;
const MessageText = styled.div`
  font: 11.5px/15px ${SEGOE};
`;
const Actions = styled.div`
  flex: 1;
  display: flex;
  justify-content: flex-end;
  padding: 11px 8px 0 0;
`;

function ErrorMessage() {
  return (
    <ErrorWindow>
      <ErrorTitle>
        <Text w={26} font={SEGOE} size={11.5}>Error</Text>
        <CloseBox $w={48} $h={20} $glass><CrossMark stroke="#3a3c70" /></CloseBox>
      </ErrorTitle>
      <ErrorBody>
        <Message>
          <ErrorIcon />
          <MessageText>
            <div><Text w={30}>20599</Text></div>
            <div><Text w={130}>Cannot open SQL server.</Text></div>
          </MessageText>
        </Message>
        <Actions>
          <Button $w={88} $h={26}><Text w={16} font={SEGOE} size={11.5}>OK</Text></Button>
        </Actions>
      </ErrorBody>
    </ErrorWindow>
  );
}

/* ---------- taskbar ---------- */
const Taskbar = styled.nav`
  position: relative;
  z-index: 2;
  display: flex;
  border-top: 1px solid #3a4450;
  background:
    linear-gradient(180deg, #f0f6fc 0 1px, transparent 1px),
    linear-gradient(90deg, #0a0e14 0, #10171e 158px, transparent 170px),
    linear-gradient(270deg, #11161c 0, #0c1016 157px, transparent 170px),
    linear-gradient(180deg, rgba(0, 0, 0, 0) 11px, rgba(20, 26, 34, 0.85) 17px, #0c1117 20px),
    linear-gradient(90deg, #b0d2f4 0, #bcdcfc 700px, #a9c9ea 940px, #bcdcfc 1000px, #86a4c4 1160px, #8aa8c8 1203px);
`;
const Ghost = styled.svg`
  position: absolute;
  left: 490px;
  top: 1px;
`;
const Pinned = styled.div`
  width: 184px;
  padding: 1px 0 0 8px;
  display: flex;
  align-items: center;
  svg:nth-child(2) { margin-left: 28px; }
  svg:nth-child(3) { margin-left: 33px; margin-bottom: 3px; }
`;
const TaskButtons = styled.div`
  display: flex;
  gap: 4px;
  align-items: flex-start;
`;
const Task = styled.div`
  width: ${(p) => p.$w || 58}px;
  height: 39px;
  padding-top: 2px;
  display: flex;
  justify-content: center;
  align-items: flex-start;
  border: 1px solid ${(p) => (p.$active ? "#e6e6fa" : "#8f9aa6")};
  border-radius: 3px;
  box-shadow: inset 0 0 0 1px ${(p) => (p.$active ? "rgba(160,150,230,.6)" : "rgba(60,75,90,.5)")};
  background: ${(p) =>
    p.$active
      ? "linear-gradient(160deg, #f2f2ff 0, #cfcdf2 35%, #8f8ce0 52%, #c9c8ee 58%, #8482a8 75%, #c8c4f4 100%)"
      : "linear-gradient(180deg, #c4dcf4 0, #9fb9d4 10px, #333f4a 17px, #20262d 24px, #33393f 100%)"};
`;
const Stack = styled.div`
  display: flex;
`;
const StackEdge = styled.div`
  width: 4px;
  height: 39px;
  border-right: 1px solid #8f9aa6;
  border-radius: 0 3px 3px 0;
  background: linear-gradient(180deg, #a9c4de 0, #8ea8c2 10px, #2a323a 17px, #30363c 100%);
`;
const Tray = styled.div`
  margin-left: auto;
  display: flex;
  align-items: center;
  color: #fff;
`;
const TrayIcons = styled.div`
  display: flex;
  align-items: center;
  gap: 8px;
  margin-right: 16px;
  svg:first-child { margin-right: 3px; }
`;
const TrayClock = styled.div`
  width: 54px;
  text-align: center;
  font: 11.5px/17px ${SEGOE};
`;
const ShowDesktop = styled.div`
  width: 14px;
  height: 39px;
  margin-left: 9px;
  border: 1px solid #75797e;
  background: linear-gradient(160deg, #6b6f73 0, #33373b 45%, #0d1013 60%);
`;

const BLOBS = [[12, 6], [50, 6], [92, 7], [130, 14], [162, 6], [185, 6], [214, 14], [262, 6], [295, 7], [322, 18], [368, 7], [402, 18], [452, 7]];

function Bar() {
  return (
    <Taskbar>
      <Ghost width="500" height="22" viewBox="0 0 500 22">
        <filter id="haze"><feGaussianBlur stdDeviation="1.800" /></filter>
        <g fill="#a84a70" opacity=".7" filter="url(#haze)">
          {BLOBS.map(([x, w]) => <ellipse key={x} cx={x} cy="3" rx={w / 1.6} ry="3.500" />)}
          <path d="M130 0H137V10Q134 16 126 15Q133 12 130 0ZM245 0H252Q248 12 244 15L240 12Z" />
        </g>
      </Ghost>
      <Pinned><StartOrb /><PlayerIcon /><ExplorerEIcon /></Pinned>
      <TaskButtons>
        <Task><LibraryIcon /></Task>
        <Stack><Task $w={50}><SheetIcon /></Task><StackEdge /><StackEdge /></Stack>
        <Task><GlobeIcon size={32} square /></Task>
        <Task><GlobeIcon size={32} square /></Task>
        <Task $active><GlobeIcon size={32} square /></Task>
      </TaskButtons>
      <Tray>
        <TrayIcons>
          <svg width="8" height="5" viewBox="0 0 8 5"><path d="M0 4.500L4 0L8 4.500Z" fill="#fff" /></svg>
          <svg width="18" height="16" viewBox="0 0 18 16">
            <path d="M2.500 1V15" stroke="#fff" strokeWidth="1.500" />
            <path d="M4 2H9L10 4H14V9H4Z" fill="#e9e9e9" />
            <circle cx="11" cy="10.500" r="4.500" fill="#dc3428" stroke="#f2b3ac" strokeWidth=".7" />
            <path d="M9 8.500L13 12.500M13 8.500L9 12.500" stroke="#fff" strokeWidth="1.500" />
          </svg>
          <svg width="16" height="16" viewBox="0 0 16 16">
            <path d="M6 3.500H14.500V11.500H5.500M9.500 12V14.500M5.500 14.500H13" fill="none" stroke="#fff" strokeWidth="1.300" />
            <path d="M1 4H5V6.500H4V12H2V6.500H1ZM1.500 1.500V4M4.500 1.500V4" fill="#fff" stroke="#fff" strokeWidth=".6" />
          </svg>
          <svg width="16" height="16" viewBox="0 0 16 16">
            <path d="M1 5.500H3.500L7.500 2V14L3.500 10.500H1Z" fill="#fff" />
            <path d="M9.500 6Q10.500 8 9.500 10M11.500 4.500Q13.500 8 11.500 11.500M13 3Q16 8 13 13" fill="none" stroke="#fff" />
          </svg>
        </TrayIcons>
        <TrayClock>
          <div><Text w={43}>3:20 PM</Text></div>
          <div><Text w={53}>9/16/2019</Text></div>
        </TrayClock>
        <ShowDesktop />
      </Tray>
    </Taskbar>
  );
}

export default function App() {
  return (
    <Screen>
      <Global />
      <AppTitle>
        <TitleLeft>
          <GlobeIcon />
          <TitleGlow><Text w={75} font={SEGOE} size={11.5}>..:: DWASYS ::..</Text></TitleGlow>
        </TitleLeft>
        <WindowButtons>
          <WindowButton $w={28}>
            <svg width="12" height="5" viewBox="0 0 12 5"><rect x=".5" y=".5" width="11" height="4" rx="1" fill="#fff" stroke="#4a5564" /></svg>
          </WindowButton>
          <WindowButton $w={27}>
            <svg width="12" height="11" viewBox="0 0 12 11">
              <path d="M3 .5H11.500V8H9" fill="#fff" stroke="#4a5564" />
              <rect x=".5" y="2.500" width="8.500" height="8" fill="#fff" stroke="#4a5564" />
              <rect x="3" y="5" width="3.500" height="3" fill="#8fa8c2" stroke="#4a5564" />
            </svg>
          </WindowButton>
          <WindowButton $w={46}><CrossMark stroke="#4a5564" /></WindowButton>
        </WindowButtons>
      </AppTitle>
      <Main>
        <Tree />
        <Workspace>
          <Brand>
            <BrandName><Text w={291}>dwaSys</Text></BrandName>
            <BrandLine><Text w={297}>dwa system application</Text></BrandLine>
          </Brand>
          <BannerWrap><Banner /></BannerWrap>
        </Workspace>
      </Main>
      <StatusBar $h={20} $gap={2} $font={TAHOMA}>
        <StatusCell $w={199} $pad={9}><UsersIcon /><Text w={81}>User Login : riska</Text></StatusCell>
        <StatusCell $w={233} $pad={9}><NetworkIcon /><Text w={102}>Server : 192.168.0.6</Text></StatusCell>
        <StatusCell $w={106} $pad={14}><CalendarIcon /><Text w={62}>16-Sep-2019</Text></StatusCell>
        <StatusCell $w={95} $pad={17}><ClockIcon /><Text w={45}>15:20:24</Text></StatusCell>
        <StatusCell $w={67} $pad={14}><RssIcon /><Text w={20}>PPR</Text></StatusCell>
      </StatusBar>
      <Bar />
      <Report />
      <ErrorMessage />
    </Screen>
  );
}
